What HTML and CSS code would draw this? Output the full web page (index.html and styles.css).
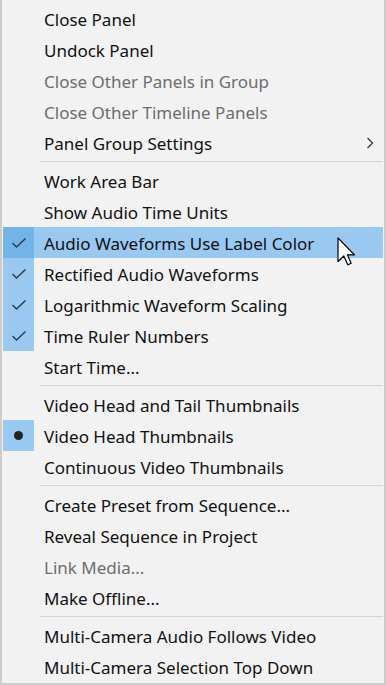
FILE: index.html
```html
<!DOCTYPE html>
<html>
<head>
<meta charset="utf-8">
<link rel="stylesheet" href="styles.css">
</head>
<body>
<div class="menu">
  <div class="item"><span class="mark"></span><span class="label">Close Panel</span></div>
  <div class="item"><span class="mark"></span><span class="label">Undock Panel</span></div>
  <div class="item disabled"><span class="mark"></span><span class="label">Close Other Panels in Group</span></div>
  <div class="item disabled"><span class="mark"></span><span class="label">Close Other Timeline Panels</span></div>
  <div class="item"><span class="mark"></span><span class="label">Panel Group Settings</span>
    <span class="sub"><svg width="8" height="12" viewBox="0 0 8 12"><path d="M1.5 1 L6.5 6 L1.5 11" fill="none" stroke="#333" stroke-width="1.2"/></svg></span></div>
  <div class="sep"></div>
  <div class="item"><span class="mark"></span><span class="label">Work Area Bar</span></div>
  <div class="item"><span class="mark"></span><span class="label">Show Audio Time Units</span></div>
  <div class="item checked hover"><span class="mark"><svg class="check" width="16" height="12" viewBox="0 0 16 12"><path d="M1.5 6 L5.5 10 L14.5 1.5" fill="none" stroke="#2b3a48" stroke-width="1.4"/></svg></span><span class="label">Audio Waveforms Use Label Color</span>
    <svg class="cursor" width="19" height="30" viewBox="0 0 19 30"><path d="M1 1 L1 24.5 L6.8 19 L10.8 27.8 L14.2 26.3 L10.3 17.8 L17.5 17.8 Z" fill="#fff" stroke="#000" stroke-width="1.2" stroke-linejoin="round"/></svg></div>
  <div class="item checked"><span class="mark"><svg class="check" width="16" height="12" viewBox="0 0 16 12"><path d="M1.5 6 L5.5 10 L14.5 1.5" fill="none" stroke="#2b3a48" stroke-width="1.4"/></svg></span><span class="label">Rectified Audio Waveforms</span></div>
  <div class="item checked"><span class="mark"><svg class="check" width="16" height="12" viewBox="0 0 16 12"><path d="M1.5 6 L5.5 10 L14.5 1.5" fill="none" stroke="#2b3a48" stroke-width="1.4"/></svg></span><span class="label">Logarithmic Waveform Scaling</span></div>
  <div class="item checked"><span class="mark"><svg class="check" width="16" height="12" viewBox="0 0 16 12"><path d="M1.5 6 L5.5 10 L14.5 1.5" fill="none" stroke="#2b3a48" stroke-width="1.4"/></svg></span><span class="label">Time Ruler Numbers</span></div>
  <div class="item"><span class="mark"></span><span class="label">Start Time...</span></div>
  <div class="sep"></div>
  <div class="item"><span class="mark"></span><span class="label">Video Head and Tail Thumbnails</span></div>
  <div class="item checked"><span class="mark"><span class="dot"></span></span><span class="label">Video Head Thumbnails</span></div>
  <div class="item"><span class="mark"></span><span class="label">Continuous Video Thumbnails</span></div>
  <div class="sep"></div>
  <div class="item"><span class="mark"></span><span class="label">Create Preset from Sequence...</span></div>
  <div class="item"><span class="mark"></span><span class="label">Reveal Sequence in Project</span></div>
  <div class="item disabled"><span class="mark"></span><span class="label">Link Media...</span></div>
  <div class="item"><span class="mark"></span><span class="label">Make Offline...</span></div>
  <div class="sep"></div>
  <div class="item"><span class="mark"></span><span class="label">Multi-Camera Audio Follows Video</span></div>
  <div class="item"><span class="mark"></span><span class="label">Multi-Camera Selection Top Down</span></div>
</div>
</body>
</html>
```

FILE: styles.css
```css
html, body {
  margin: 0;
  padding: 0;
  background: #f2f2f2;
}
.menu {
  box-sizing: border-box;
  width: 386px;
  height: 685px;
  background: #f2f2f2;
  border: 2px solid #cccccc;
  border-top: none;
  padding: 3px 1px 0 1px;
  display: flex;
  flex-direction: column;
  font-family: "Noto Sans", "Open Sans", sans-serif;
  font-size: 17px;
  color: #111;
}
.item {
  position: relative;
  display: grid;
  grid-template-columns: 31px 1fr 27px;
  height: 31px;
  align-items: center;
}
.mark {
  height: 31px;
  display: flex;
  align-items: center;
  justify-content: center;
}
.label {
  padding-left: 10px;
  padding-top: 2px;
  line-height: 29px;
  white-space: nowrap;
}
.sub {
  display: flex;
  align-items: center;
  justify-content: center;
}
.disabled .label {
  color: #6d6d6d;
}
.checked .mark {
  background: #99c9f1;
}
.hover {
  background: #99c9f1;
}
.hover .mark {
  background: #72b3ea;
}
.dot {
  width: 9px;
  height: 9px;
  border-radius: 50%;
  background: #222;
}
.sep {
  height: 1px;
  margin: 3px 0 3px 37px;
  background: #d5d5d5;
}
.cursor {
  position: absolute;
  left: 334px;
  top: 10px;
}
```
